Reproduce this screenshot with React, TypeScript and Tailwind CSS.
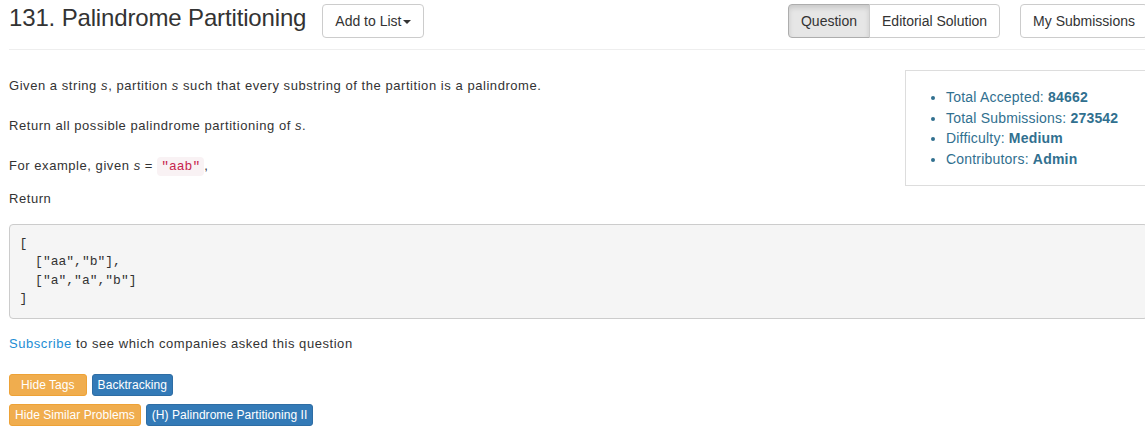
import React from "react";

const sans = { fontFamily: '"Liberation Sans", Arial, sans-serif' };
const mono = { fontFamily: '"Liberation Mono", "Courier New", monospace' };

function Tag({ children, tone, wide }: { children: React.ReactNode; tone: "warn" | "primary"; wide?: boolean }) {
  const color =
    tone === "warn" ? "bg-[#f0ad4e] border-[#eea236]" : "bg-[#337ab7] border-[#2e6da4]";
  return (
    <span
      className={`inline-block h-[22px] rounded-[3px] border text-[12px] leading-[20px] tracking-[0.05px] text-white ${color} ${
        wide ? "px-[11px]" : "px-[5px]"
      }`}
    >
      {children}
    </span>
  );
}

function Btn({ children, active, className = "" }: { children: React.ReactNode; active?: boolean; className?: string }) {
  return (
    <button
      type="button"
      className={`h-[34px] border px-3 text-[14px] leading-[20px] text-[#333] ${
        active ? "border-[#adadad] bg-[#e6e6e6] shadow-[inset_0_3px_5px_rgba(0,0,0,0.125)]" : "border-[#ccc] bg-white"
      } ${className}`}
    >
      {children}
    </button>
  );
}

export default function App() {
  return (
    <div className="h-[428px] w-[1145px] overflow-hidden bg-white text-[#333]" style={sans}>
      <div className="ml-[9px] w-[1139px]">
        <header className="pt-[4px]">
          <div className="flex items-start justify-between">
            <div className="flex items-start">
              <h3 className="mt-[1px] text-[24px] leading-[26px] font-normal tracking-[-0.15px] text-[#333]">
                131. Palindrome Partitioning
              </h3>
              <Btn className="ml-[16px] rounded-[4px]">
                Add to List
                <span className="ml-[2px] inline-block h-0 w-0 border-x-[4px] border-t-[4px] border-x-transparent border-t-[#333] align-middle" />
              </Btn>
            </div>
            <div className="flex items-start gap-[20px]">
              <div className="flex">
                <Btn active className="rounded-l-[4px]">
                  Question
                </Btn>
                <Btn className="-ml-px rounded-r-[4px]">Editorial Solution</Btn>
              </div>
              <Btn className="rounded-[4px]">My Submissions</Btn>
            </div>
          </div>
          <hr className="mt-[11px] border-0 border-t border-[#eee]" />
        </header>

        <div className="mt-[20px] flex items-start justify-between">
          <div className="pt-[6px] text-[13px] leading-[20px] tracking-[0.55px]">
            <p>
              Given a string <i>s</i>, partition <i>s</i> such that every substring of the partition is a palindrome.
            </p>
            <p className="mt-[20px]">
              Return all possible palindrome partitioning of <i>s</i>.
            </p>
            <p className="mt-[20px]">
              For example, given <i>s</i> ={" "}
              <code
                className="rounded-[4px] bg-[#f9f2f4] px-[4px] py-[2px] text-[13px] tracking-normal text-[#c7254e]"
                style={mono}
              >
                "aab"
              </code>
              ,
            </p>
            <p className="mt-[12px]">Return</p>
          </div>
          <div className="w-[243px] border border-[#ddd] py-[16px]">
            <ul className="list-disc pl-[40px] text-[14px] leading-[20.6px] tracking-[0.2px] text-[#31708f]">
              <li>
                Total Accepted: <b>84662</b>
              </li>
              <li>
                Total Submissions: <b>273542</b>
              </li>
              <li>
                Difficulty: <b>Medium</b>
              </li>
              <li>
                Contributors: <b>Admin</b>
              </li>
            </ul>
          </div>
        </div>

        <pre
          className="mt-[15px] rounded-[4px] border border-[#ccc] bg-[#f5f5f5] p-[9.5px] text-[13px] leading-[18.57px] text-[#333]"
          style={mono}
        >
          {`[\n  ["aa","b"],\n  ["a","a","b"]\n]`}
        </pre>

        <p className="mt-[15px] text-[13px] leading-[20px] tracking-[0.55px]">
          <a className="text-[#1d8dd4]">Subscribe</a> to see which companies asked this question
        </p>

        <div className="mt-[20px] flex gap-[5px]">
          <Tag tone="warn" wide>
            Hide Tags
          </Tag>
          <Tag tone="primary">Backtracking</Tag>
        </div>
        <div className="mt-[8px] flex gap-[5px]">
          <Tag tone="warn">Hide Similar Problems</Tag>
          <Tag tone="primary">(H) Palindrome Partitioning II</Tag>
        </div>
      </div>
    </div>
  );
}
